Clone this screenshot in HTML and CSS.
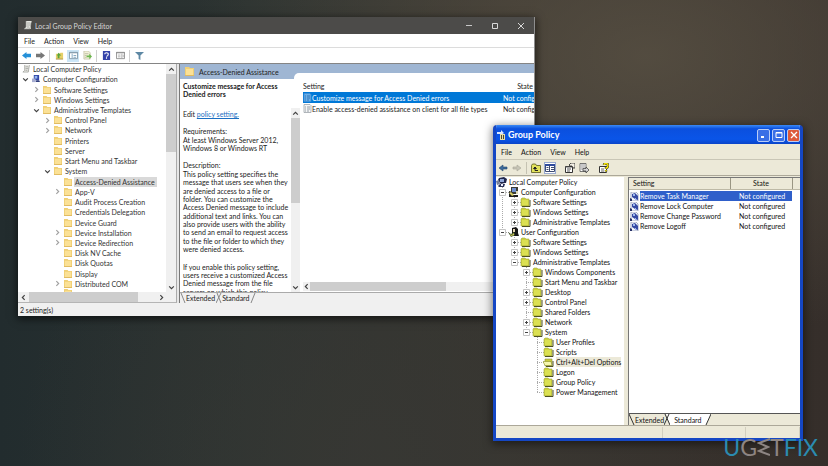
FILE: index.html
```html
<!DOCTYPE html>
<html lang="en">
<head>
<meta charset="utf-8">
<title>Group Policy Editor</title>
<link rel="stylesheet" href="styles.css">
</head>
<body>
<svg class="defs" aria-hidden="true">
  <symbol id="folder" viewBox="0 0 9 9"><path d="M0 0h4l1 1h4v8H0z" fill="#f0cf74"/><path d="M1 2h7v6H1z" fill="#fbe196"/><path d="M0 8h9v1H0z" fill="#dfb960"/></symbol>
  <symbol id="scroll" viewBox="0 0 9 9"><path d="M3 0h6L8 2v6H1l2-2z" fill="#e6e6e1"/><path d="M3 0v6L1 8h6l1-6 1-2M4 2h3M4 4h3M4 6h2" fill="none" stroke="#8f918d" stroke-width=".7"/></symbol>
  <symbol id="pcs" viewBox="0 0 9 9"><path d="M2 0h6v6H2z" fill="#3146a8"/><path d="M3 1h3v3H3z" fill="#95b7ee"/><path d="M0 4h4v4H0z" fill="#a6acd0"/><path d="M5 6h3l1 2H4z" fill="#33407e"/></symbol>
  <symbol id="right" viewBox="0 0 6 6"><path d="M2 1l2 2-2 2" fill="none" stroke="#a0a0a0"/></symbol>
  <symbol id="down" viewBox="0 0 6 6"><path d="M1 2l2 2 2-2" fill="none" stroke="#404040"/></symbol>
  <symbol id="up" viewBox="0 0 6 6"><path d="M1 4l2-2 2 2" fill="none" stroke="#404040"/></symbol>
  <symbol id="next" viewBox="0 0 6 6"><path d="M2 1l2 2-2 2" fill="none" stroke="#404040"/></symbol>
  <symbol id="prev" viewBox="0 0 6 6"><path d="M4 1L2 3l2 2" fill="none" stroke="#404040"/></symbol>
  <symbol id="page" viewBox="0 0 9 9"><path d="M1 .5h6l1 1v7H1z" fill="#f4f5f6" stroke="#9da3aa" stroke-width=".8"/><path d="M2 3h1M4 3h3M2 5h1M4 5h3M2 7h1M4 7h2" stroke="#7f8993" stroke-width=".8"/></symbol>
  <symbol id="pagesel" viewBox="0 0 9 9"><path d="M1 .5h6l1 1v7H1z" fill="#69aee8" stroke="#3f8ed6" stroke-width=".8"/><path d="M2 3h1M4 3h3M2 5h1M4 5h3M2 7h1M4 7h2" stroke="#2468a8" stroke-width=".8"/></symbol>
  <symbol id="xfolder" viewBox="0 0 11 10"><path d="M1 2l1-1h3l1 1h3v7H1z" fill="#cdd23c" stroke="#a3a845" stroke-width=".6"/><path d="M2 3h6v5H2z" fill="#dbe052"/><path d="M10 3v6.5H2" fill="none" stroke="#4d4f24"/></symbol>
  <symbol id="xopen" viewBox="0 0 11 10"><path d="M2 2h7v7H2z" fill="#c9cc3c" stroke="#8b8f40" stroke-width=".6"/><path d="M0 4.500h8l1 4H2z" fill="#f6f7b0" stroke="#8b8f2a" stroke-width=".6"/><path d="M10 4v5.500H3" fill="none" stroke="#4d4f24"/></symbol>
  <symbol id="xroot" viewBox="0 0 11 10"><path d="M3 1l5-1 3 2-1 4H4L2 3z" fill="#20264c"/><path d="M4 2h4v3H4z" fill="#8fa6d8"/><path d="M0 4l3-1 1 4-3 1z" fill="#77809a"/><path d="M2 9l3-3 4 1-1 3H3z" fill="#2a3158"/><path d="M5 7h2v2H5z" fill="#eef"/></symbol>
  <symbol id="xcomp" viewBox="0 0 11 10"><path d="M3 0h7v7H3z" fill="#3a3c34"/><path d="M4 1h4v4H4z" fill="#6d8fd0"/><path d="M1 4l3 1 1 3 5 0v2H1z" fill="#1d1d1d"/><path d="M1 6l2-1 3 3-2 1z" fill="#d8cf65"/><path d="M8 4h2v3H8z" fill="#d9d6b4"/></symbol>
  <symbol id="xuser" viewBox="0 0 11 10"><path d="M4 1l4-1 2 2v4l1 3H6L4 6z" fill="#161616"/><path d="M5 2h2v3H5z" fill="#e8d7b5"/><path d="M0 5l3 2 3-2 1 3-4 2z" fill="#46572b"/><path d="M2 7l2 1 2-2v2L3 9z" fill="#d7d25a"/></symbol>
  <symbol id="xset" viewBox="0 0 9 9"><path d="M1 0h5l2 2v7H1z" fill="#f7f8fc" stroke="#8290b0" stroke-width=".7"/><path d="M2 2l3-1 3 3v4l-3-1-3-2z" fill="#3549a3"/><path d="M3 2h2v2H3zM5 6h1v2H5z" fill="#9db8ed"/><path d="M0 6l2 1v2H0z" fill="#273166"/></symbol>
  <symbol id="minus" viewBox="0 0 7 7"><path d="M.5.5h6v6h-6z" fill="#fff" stroke="#c5c5c5"/><path d="M2 3.500h3" stroke="#444"/></symbol>
  <symbol id="plus" viewBox="0 0 7 7"><path d="M.5.5h6v6h-6z" fill="#fff" stroke="#c5c5c5"/><path d="M2 3.500h3M3.500 2v3" stroke="#444"/></symbol>
</svg>

<main class="desktop">
<section class="win ten" aria-label="Local Group Policy Editor">
  <header class="title">
    <svg class="ico"><use href="#scroll"/></svg>
    <h1>Local Group Policy Editor</h1>
    <div class="caption">
      <button aria-label="Minimize"><svg viewBox="0 0 8 8"><path d="M1 3.500h6" stroke="#c8c8c8"/></svg></button>
      <button aria-label="Maximize"><svg viewBox="0 0 8 8"><path d="M1.500 1.500h5v5h-5z" fill="none" stroke="#d8d8d8"/></svg></button>
      <button aria-label="Close"><svg viewBox="0 0 8 8"><path d="M1 1l6 6M7 1L1 7" stroke="#d8d8d8"/></svg></button>
    </div>
  </header>
  <nav class="menu"><button>File</button><button>Action</button><button>View</button><button>Help</button></nav>
  <div class="tools">
    <button aria-label="Back"><svg viewBox="0 0 10 10"><path d="M0 5l5-4v2h5v4H5v2z" fill="#2590d8"/></svg></button>
    <button aria-label="Forward"><svg viewBox="0 0 10 10"><path d="M10 5L5 1v2H0v4h5v2z" fill="#777"/></svg></button>
    <i class="sep"></i>
    <button aria-label="Up one level"><svg viewBox="0 0 10 10"><path d="M1 3h4l1-1h3v7H1z" fill="#e5cf69"/><path d="M3 8V5H2l2-3 3 3H5v3z" fill="#58a53c"/><path d="M1 9h8" stroke="#a8934a"/></svg></button>
    <button class="on" aria-label="Show tree"><svg viewBox="0 0 10 10"><path d="M.5 1.500h9v7h-9z" fill="#fff" stroke="#7f97a8"/><path d="M0 2h10" stroke="#7f97a8"/><path d="M3.500 3v5M5 5h3M5 7h3" stroke="#7ba4c0" fill="none"/></svg></button>
    <button aria-label="Export list"><svg viewBox="0 0 10 10"><path d="M1 0h5l2 2v7H1z" fill="#f2f0d8" stroke="#b7b598" stroke-width=".7"/><path d="M2 3h4M2 5h2M2 7h2" stroke="#a8a88e" stroke-width=".7"/><path d="M4 5h3V3l3 3-3 3V7H4z" fill="#6cb74e"/></svg></button>
    <i class="sep"></i>
    <button aria-label="Help"><svg viewBox="0 0 10 10"><path d="M1 0h8v10H1z" fill="#3442a9"/><path d="M3 3.500Q3 2 5 2t2 1.500T5 6M5 7v1.500" fill="none" stroke="#fff" stroke-width="1.200"/></svg></button>
    <button aria-label="Show action pane"><svg viewBox="0 0 10 10"><path d="M.5 1.500h9v7h-9z" fill="#fff" stroke="#8b8b8b"/><path d="M0 2h10" stroke="#8b8b8b"/><path d="M6.500 3v5M2 4.500h3M2 6.500h3M8 4v3" stroke="#aaa" fill="none"/></svg></button>
    <i class="sep"></i>
    <button aria-label="Filter"><svg viewBox="0 0 10 10"><path d="M0 1h10L6 5v5l-2-1V5z" fill="#5d88a4"/></svg></button>
  </div>
  <div class="panes">
    <div class="side">
      <ul class="tree">
        <li class="l0"><svg class="ico"><use href="#scroll"/></svg>Local Computer Policy</li>
        <li class="l1"><button class="ex" aria-label="Collapse"><svg><use href="#down"/></svg></button><svg class="ico"><use href="#pcs"/></svg>Computer Configuration</li>
        <li class="l2"><button class="ex" aria-label="Expand"><svg><use href="#right"/></svg></button><svg class="ico"><use href="#folder"/></svg>Software Settings</li>
        <li class="l2"><button class="ex" aria-label="Expand"><svg><use href="#right"/></svg></button><svg class="ico"><use href="#folder"/></svg>Windows Settings</li>
        <li class="l2"><button class="ex" aria-label="Collapse"><svg><use href="#down"/></svg></button><svg class="ico"><use href="#folder"/></svg>Administrative Templates</li>
        <li class="l3"><button class="ex" aria-label="Expand"><svg><use href="#right"/></svg></button><svg class="ico"><use href="#folder"/></svg>Control Panel</li>
        <li class="l3"><button class="ex" aria-label="Expand"><svg><use href="#right"/></svg></button><svg class="ico"><use href="#folder"/></svg>Network</li>
        <li class="l3"><i class="ex"></i><svg class="ico"><use href="#folder"/></svg>Printers</li>
        <li class="l3"><i class="ex"></i><svg class="ico"><use href="#folder"/></svg>Server</li>
        <li class="l3"><i class="ex"></i><svg class="ico"><use href="#folder"/></svg>Start Menu and Taskbar</li>
        <li class="l3"><button class="ex" aria-label="Collapse"><svg><use href="#down"/></svg></button><svg class="ico"><use href="#folder"/></svg>System</li>
        <li class="l4"><i class="ex"></i><svg class="ico"><use href="#folder"/></svg><span class="sel">Access-Denied Assistance</span></li>
        <li class="l4"><button class="ex" aria-label="Expand"><svg><use href="#right"/></svg></button><svg class="ico"><use href="#folder"/></svg>App-V</li>
        <li class="l4"><i class="ex"></i><svg class="ico"><use href="#folder"/></svg>Audit Process Creation</li>
        <li class="l4"><i class="ex"></i><svg class="ico"><use href="#folder"/></svg>Credentials Delegation</li>
        <li class="l4"><i class="ex"></i><svg class="ico"><use href="#folder"/></svg>Device Guard</li>
        <li class="l4"><button class="ex" aria-label="Expand"><svg><use href="#right"/></svg></button><svg class="ico"><use href="#folder"/></svg>Device Installation</li>
        <li class="l4"><button class="ex" aria-label="Expand"><svg><use href="#right"/></svg></button><svg class="ico"><use href="#folder"/></svg>Device Redirection</li>
        <li class="l4"><i class="ex"></i><svg class="ico"><use href="#folder"/></svg>Disk NV Cache</li>
        <li class="l4"><i class="ex"></i><svg class="ico"><use href="#folder"/></svg>Disk Quotas</li>
        <li class="l4"><i class="ex"></i><svg class="ico"><use href="#folder"/></svg>Display</li>
        <li class="l4"><button class="ex" aria-label="Expand"><svg><use href="#right"/></svg></button><svg class="ico"><use href="#folder"/></svg>Distributed COM</li>
        <li class="l4 cut"><i class="ex"></i><svg class="ico"><use href="#folder"/></svg></li>
      </ul>
      <div class="vbar"><button aria-label="Scroll up"><svg><use href="#up"/></svg></button><i class="thumb tree-thumb"></i><button class="end" aria-label="Scroll down"><svg><use href="#down"/></svg></button></div>
      <div class="hbar"><button aria-label="Scroll left"><svg><use href="#prev"/></svg></button><i class="thumb"></i><button class="end" aria-label="Scroll right"><svg><use href="#next"/></svg></button></div>
    </div>
    <div class="main">
      <div class="band"><h2><svg class="ico"><use href="#folder"/></svg>Access-Denied Assistance</h2><i class="notch"></i></div>
      <div class="work">
        <article class="desc">
          <h3>Customize message for Access Denied errors</h3>
          <p class="edit">Edit <a href="#policy">policy setting.</a></p>
          <p>Requirements:<br>At least Windows Server 2012,<br>Windows 8 or Windows RT</p>
          <p>Description:<br>This policy setting specifies the<br>message that users see when they<br>are denied access to a file or<br>folder. You can customize the<br>Access Denied message to include<br>additional text and links. You can<br>also provide users with the ability<br>to send an email to request access<br>to the file or folder to which they<br>were denied access.</p>
          <p>If you enable this policy setting,<br>users receive a customized Access<br>Denied message from the file<br>servers on which this policy</p>
        </article>
        <div class="vbar mid"><button aria-label="Scroll up"><svg><use href="#up"/></svg></button><i class="thumb"></i><button class="end" aria-label="Scroll down"><svg><use href="#down"/></svg></button></div>
        <div class="list">
          <table>
            <thead><tr><th>Setting</th><th class="state">State</th></tr></thead>
            <tbody>
              <tr class="picked"><td><div class="cell"><svg class="ico"><use href="#pagesel"/></svg><span>Customize message for Access Denied errors</span></div></td><td class="state">Not configured</td></tr>
              <tr><td><div class="cell"><svg class="ico"><use href="#page"/></svg><span>Enable access-denied assistance on client for all file types</span></div></td><td class="state">Not configured</td></tr>
            </tbody>
          </table>
          <div class="hbar"><button aria-label="Scroll left"><svg><use href="#prev"/></svg></button><i class="thumb"></i></div>
        </div>
      </div>
      <div class="tabs">
        <svg class="slant" viewBox="0 0 6 10"><path d="M1 0l4 10" stroke="#888"/></svg><button>Extended</button><svg class="slant" viewBox="0 0 6 10"><path d="M0 10L5 0M1 0l4 10" stroke="#888" fill="none"/></svg><button>Standard</button><svg class="slant" viewBox="0 0 6 10"><path d="M1 10L5 0" stroke="#888"/></svg>
      </div>
    </div>
  </div>
  <footer class="status">2 setting(s)</footer>
</section>

<section class="win xp" aria-label="Group Policy">
  <header class="title">
    <svg class="ico" viewBox="0 0 10 10"><path d="M0 2h4V0l3 3-3 2V4H0z" fill="#dbe7ff"/><path d="M3 4h5v6H3z" fill="#e9dda4"/><path d="M4 5h1v4H4zM6 5h1v4H6z" fill="#4d4a30"/></svg>
    <h1>Group Policy</h1>
    <div class="caption">
      <button aria-label="Minimize"><svg viewBox="0 0 8 8"><path d="M1 6h3" stroke="#fff" stroke-width="2"/></svg></button>
      <button aria-label="Maximize"><svg viewBox="0 0 8 8"><path d="M1 1.500h6v5H1zM1 2h6" fill="none" stroke="#fff"/></svg></button>
      <button class="close" aria-label="Close"><svg viewBox="0 0 8 8"><path d="M1 1l6 6M7 1L1 7" stroke="#fff" stroke-width="1.300"/></svg></button>
    </div>
  </header>
  <nav class="menu"><button>File</button><button>Action</button><button>View</button><button>Help</button></nav>
  <div class="tools">
    <button aria-label="Back"><svg viewBox="0 0 10 10"><path d="M1 5l4-3v2h4v2H5v2z" fill="#3e6c9c" stroke="#24476f" stroke-width=".6"/></svg></button>
    <button aria-label="Forward"><svg viewBox="0 0 10 10"><path d="M9 5L5 2v2H1v2h4v2z" fill="#c6c4b6" stroke="#a8a698" stroke-width=".6"/></svg></button>
    <i class="sep"></i>
    <button aria-label="Up one level"><svg viewBox="0 0 10 10"><path d="M.5 2.500l1-1.500h3l1 1.500h4v7h-9z" fill="#e2e25c" stroke="#55551c" stroke-width=".8"/><path d="M4 4L2.500 5.500h3zM4 5v2.500h3" fill="none" stroke="#222"/></svg></button>
    <button class="on" aria-label="Show tree"><svg viewBox="0 0 10 10"><path d="M.5 1.500h9v7h-9z" fill="#fff" stroke="#3d4b74"/><path d="M0 2h10" stroke="#2d4a9d" stroke-width="2"/><path d="M4.500 2v6M1.500 4.500h2M1.500 6.500h2M6 4.500h3M6 6.500h3" stroke="#3d4b74"/></svg></button>
    <i class="space"></i>
    <button aria-label="Properties"><svg viewBox="0 0 10 10"><path d="M.5 3.500h7v6h-7z" fill="#fff" stroke="#333"/><path d="M0 4h7M2 6h4M2 8h3" stroke="#555"/><path d="M4 2l2-2h4v5H8L7 3H5z" fill="#f3f0e5" stroke="#222" stroke-width=".8"/></svg></button>
    <button aria-label="Export list"><svg viewBox="0 0 10 10"><path d="M1 .5h6v8H1z" fill="#fff" stroke="#555" stroke-width=".8"/><path d="M2 2h4M2 4h4M2 6h2" stroke="#777" stroke-width=".8"/><path d="M4 5.500h3V4l3 3-3 3V8H4z" fill="#d5d5d5" stroke="#333" stroke-width=".7"/></svg></button>
    <i class="space"></i>
    <button aria-label="Help"><svg viewBox="0 0 10 10"><path d="M.5 3.500h7v6h-7z" fill="#fff" stroke="#333"/><path d="M2 6h3M2 8h3" stroke="#666"/><path d="M5 2Q5 .5 7 .5T9 2.500T7 5v1M7 7v1.500" fill="none" stroke="#333" stroke-width="2.400"/><path d="M5 2Q5 .5 7 .5T9 2.500T7 5v1M7 7v1.500" fill="none" stroke="#f0e000" stroke-width="1.500"/></svg></button>
  </div>
  <div class="panes">
    <ul class="tree">
      <li class="l0"><svg class="ico"><use href="#xroot"/></svg>Local Computer Policy</li>
      <li class="l1"><button class="ex" aria-label="Collapse"><svg><use href="#minus"/></svg></button><svg class="ico"><use href="#xcomp"/></svg>Computer Configuration</li>
      <li class="l2 trunk"><button class="ex" aria-label="Expand"><svg><use href="#plus"/></svg></button><svg class="ico"><use href="#xfolder"/></svg>Software Settings</li>
      <li class="l2 trunk"><button class="ex" aria-label="Expand"><svg><use href="#plus"/></svg></button><svg class="ico"><use href="#xfolder"/></svg>Windows Settings</li>
      <li class="l2 trunk last"><button class="ex" aria-label="Expand"><svg><use href="#plus"/></svg></button><svg class="ico"><use href="#xfolder"/></svg>Administrative Templates</li>
      <li class="l1 last"><button class="ex" aria-label="Collapse"><svg><use href="#minus"/></svg></button><svg class="ico"><use href="#xuser"/></svg>User Configuration</li>
      <li class="l2"><button class="ex" aria-label="Expand"><svg><use href="#plus"/></svg></button><svg class="ico"><use href="#xfolder"/></svg>Software Settings</li>
      <li class="l2"><button class="ex" aria-label="Expand"><svg><use href="#plus"/></svg></button><svg class="ico"><use href="#xfolder"/></svg>Windows Settings</li>
      <li class="l2 last"><button class="ex" aria-label="Collapse"><svg><use href="#minus"/></svg></button><svg class="ico"><use href="#xfolder"/></svg>Administrative Templates</li>
      <li class="l3"><button class="ex" aria-label="Expand"><svg><use href="#plus"/></svg></button><svg class="ico"><use href="#xfolder"/></svg>Windows Components</li>
      <li class="l3"><i class="ex"></i><svg class="ico"><use href="#xfolder"/></svg>Start Menu and Taskbar</li>
      <li class="l3"><button class="ex" aria-label="Expand"><svg><use href="#plus"/></svg></button><svg class="ico"><use href="#xfolder"/></svg>Desktop</li>
      <li class="l3"><button class="ex" aria-label="Expand"><svg><use href="#plus"/></svg></button><svg class="ico"><use href="#xfolder"/></svg>Control Panel</li>
      <li class="l3"><i class="ex"></i><svg class="ico"><use href="#xfolder"/></svg>Shared Folders</li>
      <li class="l3"><button class="ex" aria-label="Expand"><svg><use href="#plus"/></svg></button><svg class="ico"><use href="#xfolder"/></svg>Network</li>
      <li class="l3 last"><button class="ex" aria-label="Collapse"><svg><use href="#minus"/></svg></button><svg class="ico"><use href="#xfolder"/></svg>System</li>
      <li class="l4"><i class="ex"></i><svg class="ico"><use href="#xfolder"/></svg>User Profiles</li>
      <li class="l4"><i class="ex"></i><svg class="ico"><use href="#xfolder"/></svg>Scripts</li>
      <li class="l4"><i class="ex"></i><svg class="ico"><use href="#xopen"/></svg><span class="sel">Ctrl+Alt+Del Options</span></li>
      <li class="l4"><i class="ex"></i><svg class="ico"><use href="#xfolder"/></svg>Logon</li>
      <li class="l4"><i class="ex"></i><svg class="ico"><use href="#xfolder"/></svg>Group Policy</li>
      <li class="l4 last"><i class="ex"></i><svg class="ico"><use href="#xfolder"/></svg>Power Management</li>
    </ul>
    <div class="main">
      <div class="list">
        <table>
          <thead><tr><th>Setting</th><th class="state">State</th><th class="rest"></th></tr></thead>
          <tbody>
            <tr class="picked"><td><div class="cell"><svg class="ico"><use href="#xset"/></svg><span>Remove Task Manager</span></div></td><td class="state">Not configured</td><td></td></tr>
            <tr><td><div class="cell"><svg class="ico"><use href="#xset"/></svg><span>Remove Lock Computer</span></div></td><td class="state">Not configured</td><td></td></tr>
            <tr><td><div class="cell"><svg class="ico"><use href="#xset"/></svg><span>Remove Change Password</span></div></td><td class="state">Not configured</td><td></td></tr>
            <tr><td><div class="cell"><svg class="ico"><use href="#xset"/></svg><span>Remove Logoff</span></div></td><td class="state">Not configured</td><td></td></tr>
          </tbody>
        </table>
      </div>
      <div class="tabs">
        <svg class="slant" viewBox="0 0 6 11"><path d="M0 0l5 11" stroke="#333"/></svg><button>Extended</button><svg class="slant" viewBox="0 0 6 11"><path d="M2 0h4v11z" fill="#fff"/><path d="M0 11L5 0M1 0l5 11" stroke="#333" fill="none"/></svg><button class="active">Standard</button><svg class="slant" viewBox="0 0 6 11"><path d="M0 0h6L1 11H0z" fill="#fff"/><path d="M1 11L6 0" stroke="#333"/></svg>
      </div>
    </div>
  </div>
  <footer class="status"><i></i><i></i><i></i></footer>
</section>
<div class="brand" role="img" aria-label="UGETFIX"><b>U</b><span>G</span><svg viewBox="0 0 13 18"><path d="M13 1L2 5l9 4-9 4 11 4" fill="none" stroke="#8d8583" stroke-width="2"/></svg><span>T</span><b>FIX</b></div>
</main>
</body>
</html>
```
FILE: styles.css
```css
* { box-sizing: border-box; }
body { margin: 0; font-family: Lato, "Open Sans", sans-serif; font-size: 7px; line-height: 10px; color: #222; }
h1, h2, h3, p, ul, table { margin: 0; padding: 0; font: inherit; }
ul { list-style: none; }
button { margin: 0; padding: 0; border: 0; background: none; color: inherit; font: inherit; display: flex; align-items: center; justify-content: center; }
svg { display: block; flex: none; }
.defs { position: absolute; width: 0; height: 0; }
table { border-collapse: collapse; table-layout: fixed; width: 100%; }
th, td { padding: 0; font-weight: inherit; text-align: left; white-space: nowrap; }

.desktop {
  position: relative;
  min-height: 100vh;
  overflow: hidden;
  background:
    radial-gradient(ellipse at 78% 12%, rgba(92, 84, 70, .75), transparent 50%),
    radial-gradient(ellipse at 45% 100%, rgba(56, 56, 52, .8), transparent 55%),
    linear-gradient(90deg, #222c2e, #2c3331 30%, #39352f 62%, #352e2a);
}
.win { position: absolute; display: flex; flex-direction: column; overflow: hidden; }
.title, .menu, .tools, .tabs, .status, .caption { display: flex; align-items: center; flex: none; }
.title h1 { flex: 1; }
.panes { flex: 1; display: flex; min-height: 0; }
.main { flex: 1; display: flex; flex-direction: column; min-width: 0; min-height: 0; }
.tree li { display: flex; align-items: center; white-space: nowrap; min-height: 0; }
.cell { display: flex; align-items: center; }
.cell span { flex: 1; }
.slant { width: 6px; height: 100%; }

/* Flat window */
.ten { inset: 17px 293px 150px 18px; background: #f0f0f0; border-right: 1px solid #8e8e8e; box-shadow: 0 2px 8px 1px rgba(0, 0, 0, .6); }
.ten .ico { width: 9px; height: 9px; margin-right: 2px; }
.ten .title { height: 17px; padding-left: 5px; background: #4c4b49; color: #d6d6d6; }
.ten .title .ico { margin-right: 3px; }
.ten .caption { gap: 18px; padding-right: 9px; }
.ten .caption svg { width: 8px; height: 8px; }
.ten .menu { height: 14px; padding-left: 6px; gap: 9px; background: #fff; border-bottom: 1px solid #dcdcdc; }
.ten .tools { height: 15px; padding-left: 2px; gap: 2px; background: #fff; }
.ten .tools button { width: 12px; height: 12px; }
.ten .tools svg { width: 9px; height: 9px; }
.ten .tools .on { background: #cce6f7; }
.tools .sep { width: 1px; height: 12px; margin: 0 1px; background: #d0d0d0; }
.ten .panes { border-top: 1px solid #858585; background: #e6e6e6; gap: 2px; }
.side { flex: 0 0 159px; display: grid; grid-template: minmax(0, 1fr) 10px / minmax(0, 1fr) 10px; background: #fff; border-bottom: 1px solid #b5b5b5; border-right: 1px solid #aaa; }
.ten .tree { display: grid; grid-template-rows: repeat(22, minmax(0, 1fr)) 3px; overflow: hidden; color: #333; }
.ten .ex { width: 8px; height: 8px; margin-right: 3px; flex: none; }
.ten .ex svg, .vbar svg, .hbar svg { width: 7px; height: 7px; }
.ten .l0 { padding-left: 4px; }
.ten .l1 { padding-left: 3px; }
.ten .l2 { padding-left: 14px; }
.ten .l3 { padding-left: 25px; }
.ten .l4 { padding-left: 35px; }
.ten .tree .ico { width: 8px; height: 8px; margin-right: 3px; }
.ten li.cut { align-items: flex-start; overflow: hidden; }
.ten .sel { background: #d9d9d9; padding: 0 2px 0 1px; margin-left: -1px; }
.vbar { display: flex; flex-direction: column; align-items: stretch; background: #f0f0f0; }
.vbar button { height: 10px; }
.vbar .thumb { background: #cdcdcd; flex: 0 0 46%; }
.vbar .tree-thumb { flex-basis: 34%; }
.vbar .end { margin-top: auto; }
.hbar { display: flex; align-items: stretch; background: #f0f0f0; }
.side .hbar { grid-column: 1 / -1; }
.hbar button { width: 11px; }
.hbar .thumb { background: #cdcdcd; flex: 0 0 69%; }
.hbar .end { margin-left: auto; margin-right: 9px; }
.ten .main { border-left: 1px solid #777; background: #fff; }
.band { display: flex; height: 15px; flex: none; background: #9fb6d3; }
.band h2 { flex: 0 0 114px; display: flex; align-items: center; padding-left: 5px; }
.band .ico { margin-right: 5px; }
.notch { flex: 1; align-self: flex-end; height: 6px; background: #fff; border-top-left-radius: 5px; }
.work { flex: 1; display: flex; min-height: 0; }
.desc { flex: 0 0 111px; padding: 3px 0 0 3px; line-height: 1.2; overflow: hidden; white-space: nowrap; }
.desc h3 { font-weight: 700; white-space: normal; margin-bottom: 11px; }
.desc p { margin-bottom: 9px; }
.desc a { color: #1b6fc2; }
.mid { flex: 0 0 9px; margin-top: 29px; }
.ten .list { flex: 1; display: flex; flex-direction: column; min-width: 0; padding-left: 3px; overflow: hidden; }
.ten .list table { margin-top: 1px; }
.ten .list th { height: 12px; }
.ten .list td { height: 11px; }
.ten .list td.state { width: 31px; overflow: hidden; }
.ten .list th.state { width: 31px; text-align: right; padding-right: 1px; }
.ten .list .ico { margin-right: 0; }
.ten .picked { background: #0078d7; color: #fff; }
.ten .list .hbar { margin-top: auto; height: 9px; margin-bottom: 1px; }
.ten .list .hbar .thumb { flex-basis: 59%; }
.ten .hbar button { width: 7px; }
.ten .side .hbar button { width: 11px; }
.ten .tabs { height: 11px; background: #f0f0f0; border-top: 1px solid #aaa; }
.ten .tabs button { padding-right: 1px; }
.ten .status { height: 13px; padding-left: 2px; }

/* Classic blue window */
.xp { inset: 125px 25px 25px 493px; background: #ece9d8; border: solid #1547c4; border-width: 0 3px 3px; border-radius: 4px 4px 0 0; box-shadow: 0 2px 8px 1px rgba(0, 0, 0, .5); color: #111; }
.xp .title { height: 19px; margin: 0 -3px; padding: 1px 3px 0 4px; background: linear-gradient(#3b8af5, #0b50de 20%, #0a55e8 75%, #0a44c8); color: #fff; font-size: 9px; font-weight: 700; }
.xp .title .ico { width: 10px; height: 10px; margin-right: 1px; }
.xp .caption { gap: 2px; }
.xp .caption button { width: 13px; height: 13px; border: 1px solid #b9cdf7; border-radius: 2px; background: #3a6fe6; }
.xp .caption .close { background: #dd5a3a; }
.xp .caption svg { width: 8px; height: 8px; }
.xp .menu { height: 16px; padding-left: 5px; gap: 9px; border-bottom: 1px solid #c9c6b6; }
.xp .tools { height: 16px; padding-left: 1px; gap: 2px; border-bottom: 1px solid #aca899; }
.xp .tools button { width: 12px; height: 12px; }
.xp .tools svg { width: 10px; height: 10px; }
.xp .tools .on { background: #fff; border: 1px solid #98a9cf; }
.xp .tools .sep { background: #c5c2b2; }
.tools .space { width: 4px; }
.xp .panes { gap: 4px; padding-top: 1px; border-bottom: 1px solid #aca899; }
.xp .tree { flex: 0 0 128px; background: #fff; }
.xp .tree li {
  --line: repeating-linear-gradient(#aaa 0 1px, transparent 1px 2px);
  --arm: repeating-linear-gradient(90deg, #aaa 0 1px, transparent 1px 2px);
  --x: 6px;
  --reach: 100%;
  height: 10px;
  background-image: var(--line), var(--arm);
  background-size: 1px var(--reach), 8px 1px;
  background-position: var(--x) 0, var(--x) 5px;
  background-repeat: no-repeat;
}
.xp .tree .last { --reach: 50%; }
.xp .tree .l0 { background: none; }
.xp .l1 { padding-left: 3px; }
.xp .tree .l2 { padding-left: 15px; --x: 18px; }
.xp .tree .l3 { padding-left: 27px; --x: 30px; }
.xp .tree .l4 { padding-left: 38px; --x: 41px; }
.xp .tree .trunk {
  background-image: var(--line), var(--arm), var(--line);
  background-size: 1px var(--reach), 8px 1px, 1px 100%;
  background-position: var(--x) 0, var(--x) 5px, 6px 0;
}
.xp .ex { width: 7px; height: 7px; margin-right: 2px; flex: none; }
.xp .ex svg { width: 7px; height: 7px; }
.xp .tree .ico { width: 11px; height: 10px; margin-right: 2px; }
.xp .sel { background: #ece9d8; }
.xp .main { border-left: 1px solid #777; border-top: 1px solid #777; }
.xp .list { flex: 1; background: #fff; }
.xp .list th { height: 11px; padding-left: 4px; background: #ece9d8; border-right: 1px solid #999684; border-bottom: 1px solid #bdb9a6; }
.xp .list td { height: 10px; }
.xp .list tbody::before { content: ""; display: table-row; height: 2px; }
.xp .list th.state { width: 62px; text-align: center; padding: 0; }
.xp .list .rest { width: 8px; padding: 0; border-right: 0; }
.xp .list .ico { width: 9px; height: 9px; margin: 0 1px; }
.xp .list td.state { padding-left: 9px; }
.xp .picked span, .xp .picked .state { background: #2f5fca; color: #fff; }
.xp .tabs { height: 12px; border-top: 1px solid #555; }
.xp .tabs button { height: 100%; }
.xp .tabs .active { background: #fff; padding: 0 4px; }
.xp .status { height: 12px; display: grid; grid-template-columns: 168fr 83fr 54fr; }
.xp .status i { height: 11px; border-right: 1px solid #d2cfbf; }

.brand { position: absolute; right: 10px; bottom: 6px; display: flex; align-items: center; font-size: 23px; line-height: 26px; color: #8d8583; }
.brand b { font-weight: 400; color: #2b8bb0; }
.brand svg { width: 13px; height: 18px; }
```
